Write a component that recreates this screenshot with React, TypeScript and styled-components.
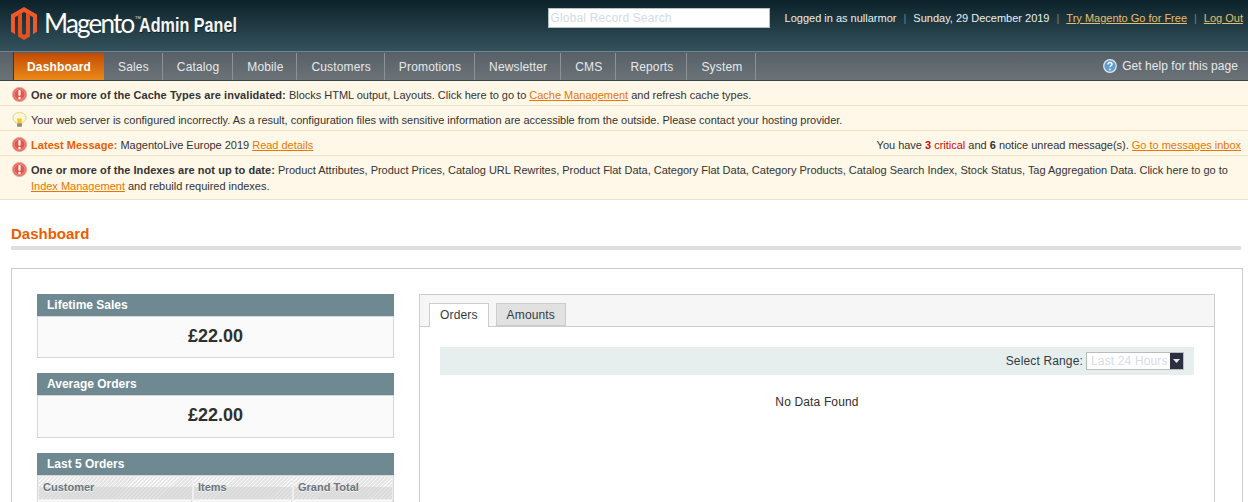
import styled, { createGlobalStyle } from "styled-components";

const GlobalStyle = createGlobalStyle`
  html, body {
    margin: 0;
    padding: 0;
    height: 502px;
    overflow: hidden;
    background: #fff;
    font-family: "Liberation Sans", Arial, sans-serif;
    font-size: 11px;
    color: #2f2f2f;
  }
  * { box-sizing: border-box; }
`;

const Header = styled.header`
  height: 52px;
  display: flex;
  justify-content: space-between;
  padding: 8px 5px 0 11px;
  background: linear-gradient(#0c2229, #34525d);
  border-bottom: 1px solid #6f858d;
`;

const Brand = styled.div`
  display: flex;
  align-items: flex-start;
  gap: 7px;
`;

const LogoMark = styled.svg`
  flex: none;
  margin-top: -1px;
`;

const BrandName = styled.span`
  font-family: Lato, sans-serif;
  font-size: 26px;
  line-height: 30px;
  letter-spacing: -1.8px;
  color: #fff;
`;

const TradeMark = styled.sup`
  font-family: "Liberation Sans", sans-serif;
  font-size: 4px;
  letter-spacing: 0;
  margin-left: 1.5px;
  vertical-align: 14px;
  line-height: 0;
  color: #dfe5e7;
`;

const BrandSub = styled.span`
  display: inline-block;
  font-weight: 700;
  font-size: 21px;
  line-height: 34px;
  margin-left: -9px;
  color: #f4f6f6;
  text-shadow: 1px 1px 0 #10262e;
  transform: scaleX(0.77);
  transform-origin: left center;
`;

const TopRight = styled.div`
  display: flex;
  align-items: flex-start;
`;

const SearchInput = styled.input`
  width: 222px;
  height: 20px;
  padding: 0 2px;
  margin-right: 15px;
  border: 1px solid #b6bfc2;
  background: #fff;
  font: 12px "Liberation Sans", sans-serif;
  letter-spacing: 0.15px;
  outline: 0;
  &::placeholder { color: #d3dbe6; opacity: 1; }
`;

const UserLine = styled.div`
  display: flex;
  height: 20px;
  align-items: center;
  color: #e9eef0;
`;

const UserSep = styled.span`
  margin: 0 7px;
  color: #70858c;
`;

const TopLink = styled.a`
  color: #e8bd6a;
  text-decoration: underline;
`;

const NavBar = styled.nav`
  height: 29px;
  display: flex;
  justify-content: space-between;
  padding-left: 13px;
  background: linear-gradient(#586067, #6b7379);
  border-bottom: 1px solid #38434a;
`;

const NavList = styled.div`
  display: flex;
  border-left: 1px solid #33393d;
`;

const NavItem = styled.a<{ $active?: boolean }>`
  display: flex;
  align-items: center;
  padding: 0 13px 0 ${(p) => (p.$active ? "13px" : "14px")};
  margin-top: 1px;
  font-size: 12px;
  letter-spacing: 0.15px;
  font-weight: ${(p) => (p.$active ? 700 : 400)};
  color: ${(p) => (p.$active ? "#fff" : "#e6e9ea")};
  background: ${(p) =>
    p.$active ? "linear-gradient(#c44a03, #ea8a1a)" : "transparent"};
  border-right: ${(p) => (p.$active ? "0" : "1px solid #8b9398")};
`;

const HelpLink = styled.a`
  display: flex;
  align-items: center;
  gap: 5px;
  height: 27px;
  padding-right: 10px;
  font-size: 12px;
  letter-spacing: 0.05px;
  color: #e6e9ea;
`;

const Notice = styled.div<{ $tall?: boolean }>`
  display: flex;
  gap: 4px;
  min-height: 25px;
  padding: 6px 7px 0 12px;
  padding-bottom: ${(p) => (p.$tall ? "5px" : "0")};
  background: #fff8e8;
  border-bottom: 1px solid #efe3c3;
  line-height: 16px;
  b { letter-spacing: 0.055px; }
`;

const NoticeIcon = styled.svg`
  flex: none;
  width: 15px;
  height: 15px;
`;

const BulbGlyph = styled.svg`
  flex: none;
  width: 15px;
  height: 16px;
`;

const NoticeText = styled.div`
  flex: 1;
  letter-spacing: -0.014px;
  color: #333;
  padding-right: 4px;
`;

const NoticeSplit = styled.div`
  flex: 1;
  display: flex;
  justify-content: space-between;
  letter-spacing: -0.014px;
  color: #333;
`;

const OrangeLink = styled.a`
  color: #ea7601;
  text-decoration: underline;
`;

const LatestLabel = styled.b`
  color: #eb5e00;
`;

const CriticalCount = styled.b`
  color: #d40707;
`;

const CriticalWord = styled.span`
  color: #d40707;
`;

const Content = styled.main`
  padding: 25px 5px 0 11px;
`;

const PageTitle = styled.h3`
  margin: 0 2px 0 0;
  padding-bottom: 3px;
  font-size: 15px;
  line-height: 18px;
  font-weight: 700;
  color: #eb5e00;
  border-bottom: 4px solid #dfdfdf;
`;

const Box = styled.section`
  display: flex;
  gap: 25px;
  height: 300px;
  margin-top: 18px;
  padding: 25px 27px 0 25px;
  border: 1px solid #ccc;
`;

const LeftCol = styled.div`
  flex: none;
  width: 357px;
  display: flex;
  flex-direction: column;
  gap: 15px;
`;

const PanelHead = styled.div`
  height: 22px;
  padding-left: 10px;
  background: #6f8992;
  font-size: 12px;
  font-weight: 700;
  line-height: 22px;
  color: #fff;
`;

const PanelValue = styled.div<{ $tall?: boolean }>`
  height: ${(p) => (p.$tall ? "43px" : "42px")};
  background: #fafafa;
  border: 1px solid #d6d6d6;
  text-align: center;
  font-size: 18px;
  font-weight: 700;
  line-height: 38px;
  color: #2f2f2f;
`;

const OrdersHead = styled.div`
  display: grid;
  grid-template-columns: 153px 98px 1fr;
  gap: 2px;
  height: 25px;
  padding: 1px;
  background: #efefef;
  border: 1px solid #d6d6d6;
  border-bottom: 0;
`;

const OrdersCell = styled.div`
  padding: 2px 0 0 4px;
  font-weight: 700;
  line-height: 17px;
  color: #6a767c;
  text-shadow: 0 1px 0 #f4f4f4;
  background:
    repeating-linear-gradient(135deg, #f8f8f8 0 1px, #e4e4e4 1px 2.8px) top / 100% 10px no-repeat,
    repeating-linear-gradient(135deg, #e2e2e2 0 1px, #dadada 1px 2.8px);
`;

const OrdersRow = styled.div`
  display: grid;
  grid-template-columns: 154px 100px 1fr;
  height: 30px;
  background: #f6f6f6;
  border-left: 1px solid #d6d6d6;
  border-right: 1px solid #d6d6d6;
`;

const OrdersRowCell = styled.div`
  border-right: 1px solid #e0e0e0;
`;

const ChartPanel = styled.div`
  flex: 1;
  border: 1px solid #ccc;
  border-bottom: 0;
`;

const TabBar = styled.div`
  display: flex;
  gap: 7px;
  height: 32px;
  padding: 8px 0 0 9px;
  background: #f6f6f6;
  border-bottom: 1px solid #ccc;
`;

const Tab = styled.a<{ $active?: boolean }>`
  height: ${(p) => (p.$active ? "24px" : "23px")};
  padding: 0 10px;
  font-size: 12px;
  letter-spacing: 0.15px;
  line-height: 22px;
  color: #2f3b45;
  background: ${(p) => (p.$active ? "#fff" : "#e1e1e1")};
  border: 1px solid #ccc;
  border-bottom: ${(p) => (p.$active ? "0" : "1px solid #ccc")};
`;

const ChartBody = styled.div`
  padding: 20px 20px 0;
  text-align: center;
`;

const RangeBar = styled.div`
  display: flex;
  justify-content: flex-end;
  align-items: center;
  gap: 3px;
  height: 28px;
  padding-right: 10px;
  background: #e6efed;
  font-size: 12px;
  letter-spacing: 0.15px;
  color: #2f3b45;
`;

const RangeSelect = styled.div`
  position: relative;
  width: 98px;
  height: 18px;
  padding-left: 4px;
  background: #fff;
  border: 1px solid #b9bcbe;
  line-height: 16px;
  font-size: 12px;
  text-align: left;
  color: #d6dbe6;
`;

const RangeArrow = styled.span`
  position: absolute;
  top: 0;
  right: 0;
  width: 13px;
  height: 16px;
  display: flex;
  align-items: center;
  justify-content: center;
  background: #2a3040;
`;

const NoData = styled.div`
  margin-top: 19px;
  font-size: 12px;
  letter-spacing: 0.15px;
  line-height: 16px;
  color: #2f2f2f;
`;

const ErrorIcon = () => (
  <NoticeIcon viewBox="0 0 15 15">
    <circle cx="7.5" cy="7.5" r="7" fill="#e25f55" stroke="#eba08f" strokeWidth="1" />
    <circle cx="7.5" cy="7.5" r="5.4" fill="#e4574e" stroke="#f3b5a8" strokeWidth="0.6" />
    <rect x="6.4" y="3" width="2.2" height="5.8" rx="1" fill="#fff" />
    <circle cx="7.5" cy="11" r="1.25" fill="#fff" />
  </NoticeIcon>
);

const BulbIcon = () => (
  <BulbGlyph viewBox="0 0 15 16">
    <path
      d="M7.5.6C3.8.6 1 2.9 1 5.8c0 2.2 2 3.4 3.2 5.2h6.6C12 9.2 14 8 14 5.8 14 2.9 11.2.6 7.5.6z"
      fill="#fef8d2"
      stroke="#e2cf92"
      strokeWidth="1"
    />
    <path d="M5.2 6.4h4.6L9.6 11H5.4z" fill="#f6c52c" />
    <rect x="5" y="11.2" width="5" height="3.6" rx="0.8" fill="#8f8c74" />
  </BulbGlyph>
);

const Logo = () => (
  <LogoMark width="26" height="33" viewBox="0 0 26 33">
    <path
      d="M13 0L26 7.6v17.2l-4 2.4V10.2L13 5 4 10.2v17L0 24.8V7.6z"
      fill="#f0592a"
    />
    <path
      d="M7 8.4l4-2.3v20.6l2 1.2 2-1.2V6.1l4 2.3v21L13 33l-6-3.6z"
      fill="#e4501f"
    />
  </LogoMark>
);

const App = () => (
  <>
    <GlobalStyle />
    <Header>
      <Brand>
        <Logo />
        <BrandName>
          Magento<TradeMark>TM</TradeMark>
        </BrandName>
        <BrandSub>Admin Panel</BrandSub>
      </Brand>
      <TopRight>
        <SearchInput placeholder="Global Record Search" readOnly />
        <UserLine>
          Logged in as nullarmor
          <UserSep>|</UserSep>
          Sunday, 29 December 2019
          <UserSep>|</UserSep>
          <TopLink>Try Magento Go for Free</TopLink>
          <UserSep>|</UserSep>
          <TopLink>Log Out</TopLink>
        </UserLine>
      </TopRight>
    </Header>
    <NavBar>
      <NavList>
        <NavItem $active>Dashboard</NavItem>
        <NavItem>Sales</NavItem>
        <NavItem>Catalog</NavItem>
        <NavItem>Mobile</NavItem>
        <NavItem>Customers</NavItem>
        <NavItem>Promotions</NavItem>
        <NavItem>Newsletter</NavItem>
        <NavItem>CMS</NavItem>
        <NavItem>Reports</NavItem>
        <NavItem>System</NavItem>
      </NavList>
      <HelpLink>
        <svg width="14" height="14" viewBox="0 0 14 14">
          <circle cx="7" cy="7" r="6.3" fill="#5f9fd0" stroke="#dfeaf3" strokeWidth="1.2" />
          <path
            d="M5 5.4c0-1.2.9-1.9 2-1.9s2 .7 2 1.8c0 1.4-2 1.4-2 3"
            fill="none"
            stroke="#fff"
            strokeWidth="1.4"
          />
          <circle cx="7" cy="10.4" r="0.9" fill="#fff" />
        </svg>
        Get help for this page
      </HelpLink>
    </NavBar>
    <Notice>
      <ErrorIcon />
      <NoticeText>
        <b>One or more of the Cache Types are invalidated:</b> Blocks HTML output, Layouts. Click
        here to go to <OrangeLink>Cache Management</OrangeLink> and refresh cache types.
      </NoticeText>
    </Notice>
    <Notice>
      <BulbIcon />
      <NoticeText>
        Your web server is configured incorrectly. As a result, configuration files with sensitive
        information are accessible from the outside. Please contact your hosting provider.
      </NoticeText>
    </Notice>
    <Notice>
      <ErrorIcon />
      <NoticeSplit>
        <span>
          <LatestLabel>Latest Message:</LatestLabel> MagentoLive Europe 2019{" "}
          <OrangeLink>Read details</OrangeLink>
        </span>
        <span>
          You have <CriticalCount>3</CriticalCount> <CriticalWord>critical</CriticalWord> and{" "}
          <b>6</b> notice unread message(s). <OrangeLink>Go to messages inbox</OrangeLink>
        </span>
      </NoticeSplit>
    </Notice>
    <Notice $tall>
      <ErrorIcon />
      <NoticeText>
        <b>One or more of the Indexes are not up to date:</b> Product Attributes, Product Prices,
        Catalog URL Rewrites, Product Flat Data, Category Flat Data, Category Products, Catalog
        Search Index, Stock Status, Tag Aggregation Data. Click here to go to{" "}
        <OrangeLink>Index Management</OrangeLink> and rebuild required indexes.
      </NoticeText>
    </Notice>
    <Content>
      <PageTitle>Dashboard</PageTitle>
      <Box>
        <LeftCol>
          <div>
            <PanelHead>Lifetime Sales</PanelHead>
            <PanelValue>£22.00</PanelValue>
          </div>
          <div>
            <PanelHead>Average Orders</PanelHead>
            <PanelValue $tall>£22.00</PanelValue>
          </div>
          <div>
            <PanelHead>Last 5 Orders</PanelHead>
            <OrdersHead>
              <OrdersCell>Customer</OrdersCell>
              <OrdersCell>Items</OrdersCell>
              <OrdersCell>Grand Total</OrdersCell>
            </OrdersHead>
            <OrdersRow>
              <OrdersRowCell />
              <OrdersRowCell />
              <OrdersRowCell />
            </OrdersRow>
          </div>
        </LeftCol>
        <ChartPanel>
          <TabBar>
            <Tab $active>Orders</Tab>
            <Tab>Amounts</Tab>
          </TabBar>
          <ChartBody>
            <RangeBar>
              Select Range:
              <RangeSelect>
                Last 24 Hours
                <RangeArrow>
                  <svg width="7" height="4" viewBox="0 0 7 4">
                    <path d="M0 0h7L3.5 4z" fill="#e8e8e8" />
                  </svg>
                </RangeArrow>
              </RangeSelect>
            </RangeBar>
            <NoData>No Data Found</NoData>
          </ChartBody>
        </ChartPanel>
      </Box>
    </Content>
  </>
);

export default App;
